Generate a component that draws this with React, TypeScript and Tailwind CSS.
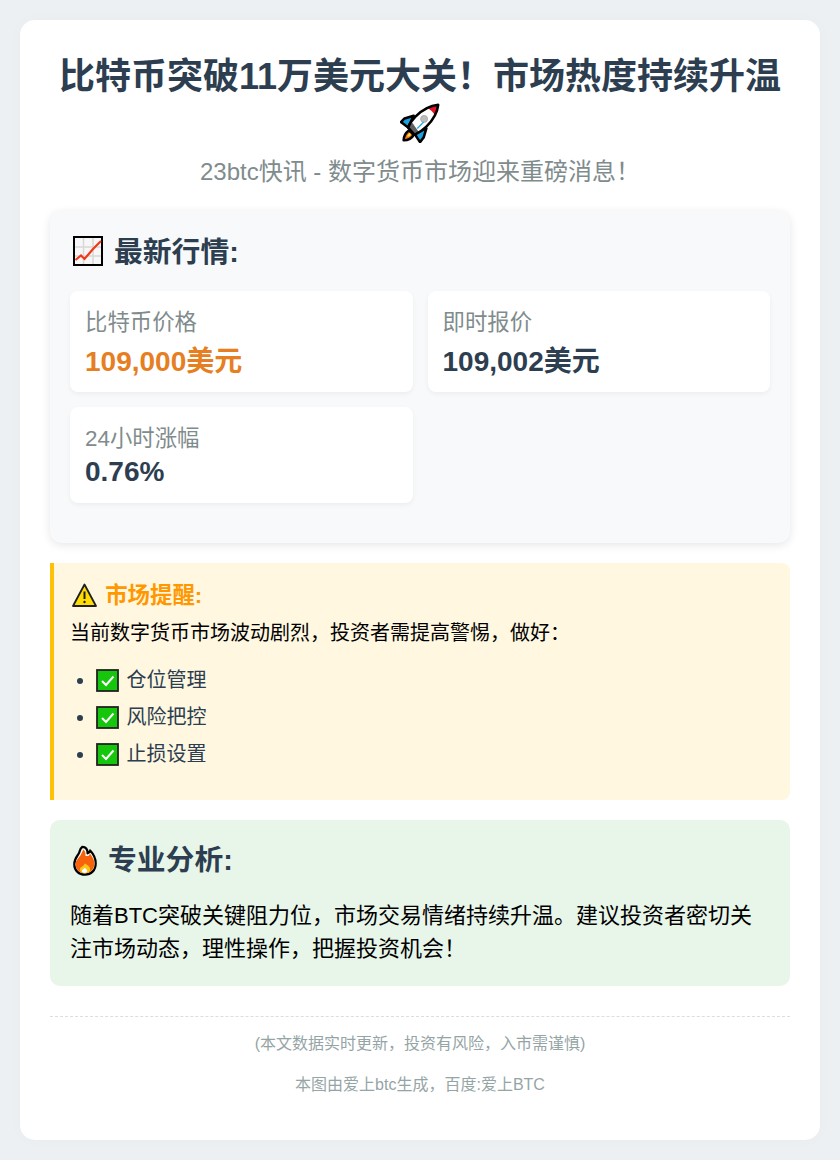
const Rocket = () => (
  <svg viewBox="0 0 44 44" className="inline-block w-[40px] h-[40px] align-[-6px]">
    <path d="M10 30 C6 33 4 38 4 41 C8 41 13 39 15 35 Z" fill="#f97316" stroke="#000" strokeWidth="2.800" strokeLinejoin="round" />
    <path d="M8 37 C8 35 10 33 11 33 L12 35 C11 37 10 37 8 37 Z" fill="#fde047" />
    <path d="M15 14 L5 17 L1 21 L9 27 Z" fill="#1ba1e2" stroke="#000" strokeWidth="2.800" strokeLinejoin="round" />
    <path d="M29 28 L26 38 L22 43 L16 34 Z" fill="#1ba1e2" stroke="#000" strokeWidth="2.800" strokeLinejoin="round" />
    <path d="M42 2 C32 3 24 8 17 15 C13 19 10 24 9 27 L16 35 C20 33 25 30 29 26 C36 19 41 12 42 2 Z" fill="#fff" />
    <path d="M42 2 C38 2.500 34 3.500 30 5.500 C33 7 37 10 38.500 14 C41 10 42 6 42 2 Z" fill="#e81224" />
    <circle cx="26.500" cy="17.500" r="3.800" fill="#bdbdbd" stroke="#a8a8a8" />
    <path d="M9 27 L16 35 L21 32.500 L13 21 Z" fill="#5f5f5f" />
    <path d="M19 28 L26 21" stroke="#29abe2" strokeWidth="1.500" fill="none" />
    <path d="M42 2 C32 3 24 8 17 15 C13 19 10 24 9 27 L16 35 C20 33 25 30 29 26 C36 19 41 12 42 2 Z" fill="none" stroke="#000" strokeWidth="2.800" strokeLinejoin="round" />
  </svg>
)

const ChartIcon = () => (
  <svg viewBox="0 0 30 30" className="inline-block w-[30px] h-[30px] ml-[3px] mr-[3px] align-[-4px]">
    <rect x="1" y="1" width="28" height="28" fill="#f7f7f7" stroke="#000" strokeWidth="2" />
    <path d="M2 11 H28 M2 20 H28 M10.500 2 V28 M20 2 V28" stroke="#d8d8d8" strokeWidth="1.500" />
    <path d="M2.500 24 L8 19.500 L11.500 23 L20 13 L28 5" stroke="#f03a17" strokeWidth="2.200" fill="none" />
  </svg>
)

const WarningIcon = () => (
  <svg viewBox="0 0 25 24" className="inline-block w-[25px] h-[24px] ml-[2px] mr-[2px] align-[-4px]">
    <path d="M12.500 1.500 L24 23 H1 Z" fill="#ffdc00" stroke="#1f1f1f" strokeWidth="1.800" strokeLinejoin="round" />
    <path d="M12.500 8.500 V16" stroke="#1f1f1f" strokeWidth="2" />
    <circle cx="12.500" cy="19" r="1.200" fill="#1f1f1f" />
  </svg>
)

const CheckIcon = () => (
  <svg viewBox="0 0 23 23" className="inline-block w-[23px] h-[23px] mr-[2px] align-[-5px]">
    <rect x="1" y="1" width="21" height="21" fill="#16c60c" stroke="#222" strokeWidth="1.800" />
    <path d="M6 12 L10 16 L17.500 7.500" stroke="#fff" strokeWidth="2" fill="none" />
  </svg>
)

const FireIcon = () => (
  <svg viewBox="0 0 28 34" className="inline-block w-[24px] h-[31px] ml-[3px] mr-[3px] align-[-6px]" preserveAspectRatio="none">
    <path d="M11 2 C16 2 17 6 17 9 C19 8 20 7 20 6 C24 10 26.500 15 26.500 20 C26.500 28 21 32.500 14 32.500 C7 32.500 1.500 28 1.500 21 C1.500 15 5 12 7 9 C8 7 8 4 11 2 Z" fill="#fff" stroke="#000" strokeWidth="2.600" strokeLinejoin="round" />
    <path d="M12 5 C14 6 15 9 14.500 12 L18 12 L20 9.500 C23 13 25 17 25 20 C25 27 20 31 14 31 C8 31 3 27 3 21 C3 17 7 14 9 11 C10 9 11 7 12 5 Z" fill="#f7630c" />
    <path d="M14 20 C16 22 20 23 20 27 C20 30 17 31 14 31 C11 31 8 30 8 27 C8 24 12 24 14 20 Z" fill="#fcc419" />
    <path d="M13.500 25 C15 26 17 27 16.500 29 C16 31 11 31 10.500 29 C10 27 12.500 27 13.500 25 Z" fill="#fff" />
  </svg>
)

const checklist = ["仓位管理", "风险把控", "止损设置"]

const App = () => {
  return (
    <div className="bg-[#ecf0f3] p-5 font-['Liberation_Sans','Noto_Sans_CJK_SC',sans-serif]">
      <div className="bg-white rounded-[15px] px-[30px] pt-[33px] pb-[43px] shadow-[0_0_20px_rgba(0,0,0,0.02)]">
        <div className="text-center mb-[16px]">
          <h1 className="text-[36px] font-bold text-[#2c3e50] leading-[48px]">
            比特币突破11万美元大关！市场热度持续升温 <Rocket />
          </h1>
          <p className="text-[24px] text-[#7f8c8d] leading-[46px]">23btc快讯 - 数字货币市场迎来重磅消息！</p>
        </div>

        <section className="bg-[#f8f9fa] rounded-[12px] px-[20px] pt-[21px] pb-[40px] shadow-[0_2px_10px_rgba(0,0,0,0.1)]">
          <h2 className="text-[28.8px] font-bold text-[#2c3e50] mb-[19px] leading-[40px]">
            <ChartIcon /> 最新行情:
          </h2>
          <div className="grid grid-cols-2 gap-[15px]">
            <div className="bg-white rounded-[8px] p-[15px] shadow-[0_2px_5px_rgba(0,0,0,0.05)]">
              <div className="text-[22.4px] text-[#7f8c8d] leading-[33px]">比特币价格</div>
              <div className="mt-[7px] text-[28px] font-bold text-[#e67e22] leading-[31px]">109,000美元</div>
            </div>
            <div className="bg-white rounded-[8px] p-[15px] shadow-[0_2px_5px_rgba(0,0,0,0.05)]">
              <div className="text-[22.4px] text-[#7f8c8d] leading-[33px]">即时报价</div>
              <div className="mt-[7px] text-[28px] font-bold text-[#2c3e50] leading-[31px]">109,002美元</div>
            </div>
            <div className="bg-white rounded-[8px] p-[15px] shadow-[0_2px_5px_rgba(0,0,0,0.05)]">
              <div className="text-[22.4px] text-[#7f8c8d] leading-[33px]">24小时涨幅</div>
              <div className="text-[28px] font-bold text-[#2c3e50] leading-[33px]">0.76%</div>
            </div>
          </div>
        </section>

        <section className="mt-[20px] bg-[#fff7e0] border-l-4 border-[#ffc107] rounded-r-[8px] px-[16px] pt-[17px] pb-[23px]">
          <h3 className="text-[22.4px] font-bold text-[#ff9800] leading-[32px]">
            <WarningIcon /> 市场提醒:
          </h3>
          <p className="text-[20px] text-black mt-[7px] leading-[28px]">当前数字货币市场波动剧烈，投资者需提高警惕，做好：</p>
          <ul className="list-disc pl-[26px] mt-[19px] text-[#2c3e50] text-[20px]">
            {checklist.map((item) => (
              <li key={item} className="mb-[8px] leading-[29px]">
                <CheckIcon /> {item}
              </li>
            ))}
          </ul>
        </section>

        <section className="mt-[20px] bg-[#e8f5e9] rounded-[10px] px-[20px] pt-[20px] pb-[21px]">
          <h2 className="text-[28.8px] font-bold text-[#2c3e50] mb-[19px] leading-[40px]">
            <FireIcon /> 专业分析:
          </h2>
          <p className="text-[22px] text-black leading-[33px]">
            随着BTC突破关键阻力位，市场交易情绪持续升温。建议投资者密切关注市场动态，理性操作，把握投资机会！
          </p>
        </section>

        <footer className="mt-[30px] border-t border-dashed border-[#dddddd] pt-[15px] text-center text-[16px] text-[#95a5a6]">
          <p>(本文数据实时更新，投资有风险，入市需谨慎)</p>
          <p className="mt-[17px]">本图由爱上btc生成，百度:爱上BTC</p>
        </footer>
      </div>
    </div>
  )
}

export default App
